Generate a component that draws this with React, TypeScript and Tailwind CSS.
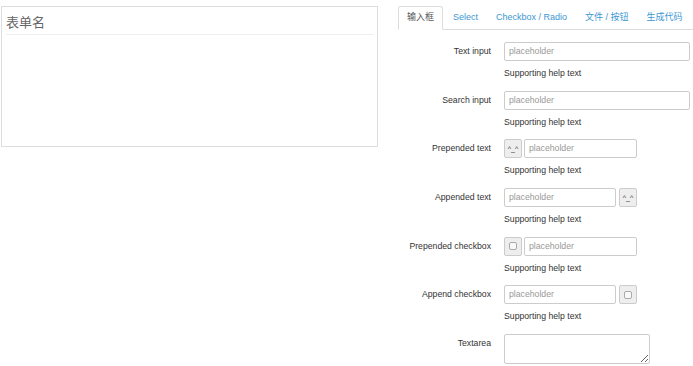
const font = "font-['Liberation_Sans','Noto_Sans_CJK_SC',sans-serif]";

const tabs = ["输入框", "Select", "Checkbox / Radio", "文件 / 按钮", "生成代码"];

const Face = () => (
  <div className="flex h-[19px] w-[18px] shrink-0 items-center justify-center rounded-[2px] border border-[#ccc] bg-[#eee] text-[7px] leading-none text-[#333]">
    ^_^
  </div>
);

const Check = () => (
  <div className="flex h-[19px] w-[18px] shrink-0 items-center justify-center rounded-[2px] border border-[#ccc] bg-[#eee]">
    <div className="h-[8px] w-[8px] rounded-[2px] border border-[#aaa] bg-[#f8f8f8]" />
  </div>
);

const Input = ({ w }: { w: string }) => (
  <div className={`flex h-[19px] items-center rounded-[2px] border border-[#ccc] bg-white pl-[4px] text-[8.7px] text-[#999] ${w}`}>
    placeholder
  </div>
);

const rows: { label: string; field: React.ReactNode }[] = [
  { label: "Text input", field: <Input w="w-[186px]" /> },
  { label: "Search input", field: <Input w="w-[186px]" /> },
  {
    label: "Prepended text",
    field: (
      <div className="flex gap-[2px]">
        <Face />
        <Input w="w-[113px]" />
      </div>
    ),
  },
  {
    label: "Appended text",
    field: (
      <div className="flex gap-[3px]">
        <Input w="w-[112px]" />
        <Face />
      </div>
    ),
  },
  {
    label: "Prepended checkbox",
    field: (
      <div className="flex gap-[2px]">
        <Check />
        <Input w="w-[113px]" />
      </div>
    ),
  },
  {
    label: "Append checkbox",
    field: (
      <div className="flex gap-[3px]">
        <Input w="w-[112px]" />
        <Check />
      </div>
    ),
  },
];

export default function App() {
  return (
    <div className={`flex h-[366px] w-[693px] overflow-hidden bg-white pl-[1px] pt-[6px] ${font}`}>
      <div className="h-[141px] w-[377px] shrink-0 border border-[#ddd] px-[4px]">
        <div className="mt-[8px] border-b border-[#eee] pb-[3px] text-[13px] leading-[16px] text-[#666]">表单名</div>
      </div>

      <div className="ml-[20px] flex-1">
        <div className="flex h-[24px] border-b border-[#ddd] text-[9px]">
          {tabs.map((t, i) => (
            <div
              key={t}
              className={
                i === 0
                  ? "mr-[2px] -mb-px flex items-center rounded-t-[3px] border border-[#ddd] border-b-white bg-white px-[8px] text-[#555]"
                  : "mr-[2px] flex items-center px-[8px] text-[#3b97d3]"
              }
            >
              {t}
            </div>
          ))}
        </div>

        <div className="mt-[12px] flex flex-col">
          {rows.map((r) => (
            <div key={r.label} className="mb-[11.7px] grid grid-cols-[93px_1fr] gap-x-[13px]">
              <div className="flex h-[19px] items-center justify-end text-[8.7px] text-[#333]">{r.label}</div>
              <div>
                {r.field}
                <div className="mt-[6px] text-[8.7px] leading-[12px] text-[#333]">Supporting help text</div>
              </div>
            </div>
          ))}
          <div className="grid grid-cols-[93px_1fr] gap-x-[13px]">
            <div className="pt-[3px] text-right text-[8.7px] text-[#333]">Textarea</div>
            <textarea className="h-[30px] w-[146px] rounded-[2px] border border-[#ccc] bg-white" />
          </div>
        </div>
      </div>
    </div>
  );
}
